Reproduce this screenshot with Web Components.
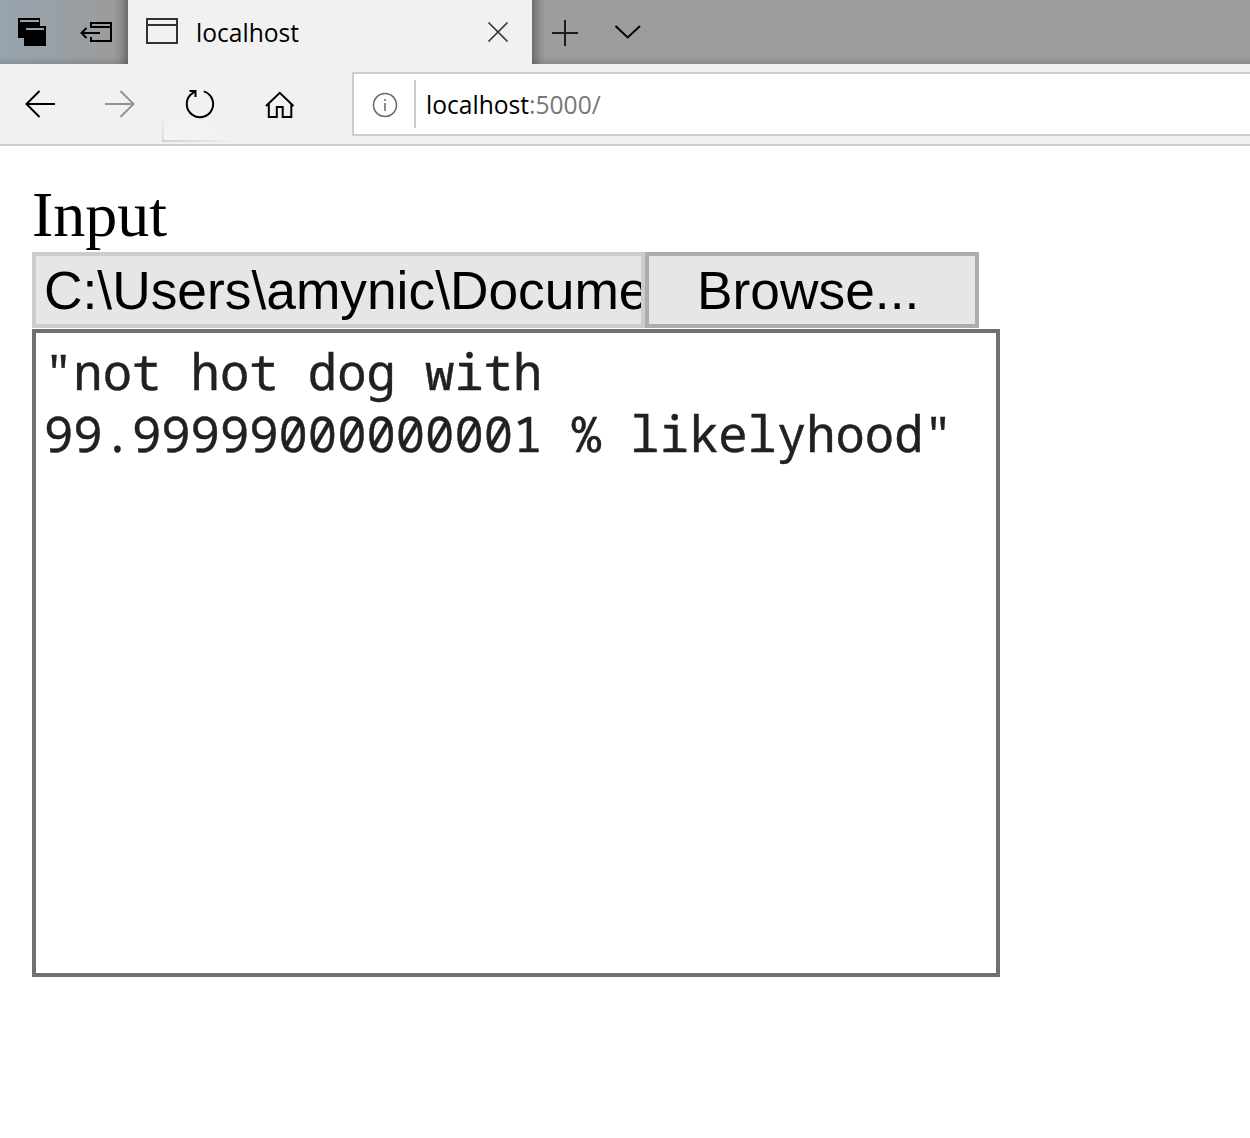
<!DOCTYPE html>
<html lang="en">
<head>
<meta charset="utf-8">
<title>localhost</title>
<style>
html, body { margin: 0; background: #fff; }
body { width: 1250px; height: 1138px; overflow: hidden; }
</style>
</head>
<body>
<browser-window>
  <tab-strip slot="tabs"><browser-tab>localhost</browser-tab></tab-strip>
  <nav-bar slot="nav"><address-field><span>localhost</span><span slot="rest">:5000/</span></address-field></nav-bar>
  <page-view>
    <field-label>Input</field-label>
    <file-picker>C:\Users\amynic\Docume<span slot="button">Browse...</span></file-picker>
    <result-box>"not hot dog with
99.99999000000001 % likelyhood"</result-box>
  </page-view>
</browser-window>
<script>
function define(name, html) {
  const template = document.createElement('template');
  template.innerHTML = html.trim();
  customElements.define(name, class extends HTMLElement {
    constructor() {
      super();
      this.attachShadow({ mode: 'open' }).append(template.content.cloneNode(true));
    }
  });
}

define('browser-window', `
<style>:host{display:flex;flex-direction:column;width:1250px;height:1138px;background:#fff}</style>
<slot name="tabs"></slot><slot name="nav"></slot><slot></slot>`);

define('tab-strip', `
<style>
:host{display:flex;height:64px;background:#9d9d9d}
.left{box-sizing:border-box;width:128px;display:flex;background:linear-gradient(180deg,transparent 56px,rgba(0,0,0,.1)),linear-gradient(90deg,transparent 114px,rgba(0,0,0,.08) 120px,rgba(0,0,0,.3)),linear-gradient(90deg,#98a3ad 0,#98a0a6 60px,#9b9c9d 98px,#9b9b9b)}
.right{flex:1;display:flex;background:linear-gradient(180deg,transparent 56px,rgba(0,0,0,.1)),linear-gradient(90deg,rgba(0,0,0,.3),rgba(0,0,0,.08) 8px,transparent 14px),#9d9d9d}
svg{display:block;fill:none;stroke:#000;stroke-width:2}
</style>
<div class="left">
<svg width="128" height="64" viewBox="0 0 128 64">
<path fill="#000" stroke="none" fill-rule="evenodd" d="M18 18H40V26H46V46H24V38H18ZM20 20V22H39V20ZM26 28V30H44V28Z"/>
<path d="M91 28V23H111V41H91V37M91 27H111M82 33H100M86.500 28L81.500 33L86.500 38"/>
</svg></div>
<slot></slot>
<div class="right">
<svg width="140" height="64" viewBox="532 0 140 64"><path d="M552 33H578M565 20V46" stroke="#1c1c1c"/><path d="M615.500 26L627.700 37.500L640 26"/></svg>
</div>`);

define('browser-tab', `
<style>
:host{display:flex;box-sizing:border-box;width:404px;height:64px;padding:0 22px 0 18px;align-items:center;background:#f1f1f1;font:24.600px/36px "Open Sans",sans-serif;color:#000}
.title{flex:1;margin-left:18px;margin-top:1px}
svg{display:block;fill:none;stroke:#333;stroke-width:2}
</style>
<svg width="32" height="64" viewBox="0 0 32 64"><path d="M1 19H31V43H1ZM1 25H31"/></svg>
<span class="title"><slot></slot></span>
<svg width="24" height="64" viewBox="486 0 24 64"><path stroke-width="1.700" d="M488.500 22.500L507.500 41.500M507.500 22.500L488.500 41.500"/></svg>`);

define('nav-bar', `
<style>
:host{display:flex;box-sizing:border-box;height:82px;background:#f1f1f1;border-bottom:2px solid #ccc;padding-top:8px}
.buttons{width:352px;height:72px;display:flex}
svg{display:block;fill:none;stroke:#000;stroke-width:2}
slot{display:block;flex:1}
</style>
<div class="buttons">
<svg width="352" height="72" viewBox="0 72 352 72">
<defs><linearGradient id="v" x1="0" y1="0" x2="0" y2="1"><stop offset="0" stop-color="#d0d0d0" stop-opacity="0"/><stop offset="1" stop-color="#d0d0d0"/></linearGradient>
<linearGradient id="h"><stop offset="0" stop-color="#d0d0d0"/><stop offset="1" stop-color="#d0d0d0" stop-opacity="0"/></linearGradient>
<radialGradient id="g" cx="0" cy="1" r="1"><stop offset="0" stop-color="#f4f4f4"/><stop offset="1" stop-color="#f4f4f4" stop-opacity="0"/></radialGradient></defs>
<rect x="164" y="114" width="66" height="26" fill="url(#g)" stroke="none"/>
<rect x="162" y="112" width="1.500" height="30" fill="url(#v)" stroke="none"/><rect x="162" y="140" width="76" height="2" fill="url(#h)" stroke="none"/>
<path d="M27 104H55M39.500 91L26.500 104L39.500 117"/>
<path stroke="#929292" d="M105 104H133M120.500 91L133.500 104L120.500 117"/>
<path d="M203.800 91.400A13.200 13.200 0 1 1 190.300 95L195.500 91M189.500 91H195.500V97"/>
<path d="M266 106L279.800 92.800L293.500 106M268.800 104V117H276.800V107H282.700V117H291.300V104"/>
</svg></div><slot></slot>`);

define('address-field', `
<style>
:host{display:flex;box-sizing:border-box;width:898px;height:64px;border:2px solid #ccc;border-right:0;background:#fff;align-items:center;font:24.600px/36px "Open Sans",sans-serif;color:#000}
svg{display:block;margin-left:18px;margin-top:1px;fill:none;stroke:#666;stroke-width:1.500}
.line{width:2px;height:48px;background:#ccc;margin:0 10px 0 16px}
.url{white-space:nowrap;margin-top:2px}
.rest{color:#777}
</style>
<svg width="26" height="26" viewBox="0 0 26 26"><circle cx="13" cy="13" r="11.500"/><path d="M13 11V19M13 7V9"/></svg>
<div class="line"></div><div class="url"><slot></slot><span class="rest"><slot name="rest"></slot></span></div>`);

define('page-view', `
<style>:host{display:flex;flex-direction:column;align-items:flex-start;flex:1;padding:32px 32px}</style><slot></slot>`);

define('field-label', `
<style>:host{display:block;height:74px;font:64px/73px "Liberation Serif",serif;color:#000}</style><slot></slot>`);

define('file-picker', `
<style>
:host{display:flex;height:76px;font:53.333px/70px "Liberation Sans",sans-serif;color:#000}
.path,.button{box-sizing:border-box;height:76px;border:4px solid #ccc;background:#e6e6e6;white-space:nowrap}
.path{width:613px;padding-left:8px;overflow:hidden}
.button{width:334px;border-color:#adadad;padding-left:48px}
</style>
<div class="path"><slot></slot></div><div class="button"><slot name="button"></slot></div>`);

define('result-box', `
<style>:host{display:block;box-sizing:border-box;width:968px;height:648px;margin-top:1px;border:4px solid #707070;padding:7px 8px;white-space:pre;font:48.870px/62px "Noto Sans Mono","DejaVu Sans Mono",monospace;color:#212121;-webkit-text-stroke:.4px #212121}</style><slot></slot>`);
</script>
</body>
</html>
